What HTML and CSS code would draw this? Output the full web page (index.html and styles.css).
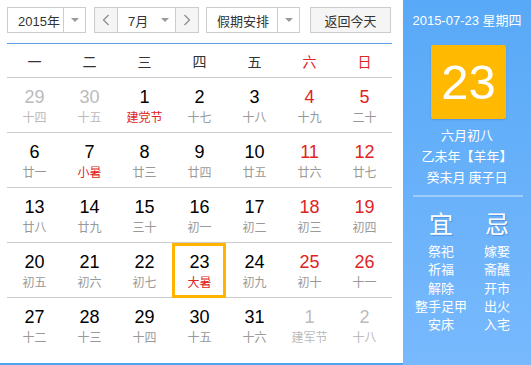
FILE: index.html
```html
<!DOCTYPE html>
<html lang="zh-CN">
<head>
    <meta charset="UTF-8">
    <title>万年历</title>
    <link rel="stylesheet" href="styles.css">
</head>
<body>

<div class="calendar">
    <div class="main">
        <div class="toolbar">
            <div class="select year">
                <span class="select-text">2015年</span>
                <span class="select-arrow"><i class="caret"></i></span>
            </div>
            <div class="month-group">
                <span class="nav-btn">
                    <svg width="8" height="12" viewBox="0 0 8 12"><polyline points="6.5,1 1.5,6 6.5,11" fill="none" stroke="#888" stroke-width="1.2"/></svg>
                </span>
                <span class="month-text">7月</span>
                <span class="month-arrow"><i class="caret"></i></span>
                <span class="nav-btn">
                    <svg width="8" height="12" viewBox="0 0 8 12"><polyline points="1.5,1 6.5,6 1.5,11" fill="none" stroke="#888" stroke-width="1.2"/></svg>
                </span>
            </div>
            <div class="select holiday">
                <span class="select-text">假期安排</span>
                <span class="select-arrow"><i class="caret"></i></span>
            </div>
            <button class="today-btn">返回今天</button>
        </div>

        <div class="weekdays">
            <span>一</span><span>二</span><span>三</span><span>四</span><span>五</span>
            <span class="red">六</span><span class="red">日</span>
        </div>

        <div class="week">
            <div class="day other"><b>29</b><small>十四</small></div>
            <div class="day other"><b>30</b><small>十五</small></div>
            <div class="day"><b>1</b><small class="fest">建党节</small></div>
            <div class="day"><b>2</b><small>十七</small></div>
            <div class="day"><b>3</b><small>十八</small></div>
            <div class="day weekend"><b>4</b><small>十九</small></div>
            <div class="day weekend"><b>5</b><small>二十</small></div>
        </div>
        <div class="week">
            <div class="day"><b>6</b><small>廿一</small></div>
            <div class="day"><b>7</b><small class="fest">小暑</small></div>
            <div class="day"><b>8</b><small>廿三</small></div>
            <div class="day"><b>9</b><small>廿四</small></div>
            <div class="day"><b>10</b><small>廿五</small></div>
            <div class="day weekend"><b>11</b><small>廿六</small></div>
            <div class="day weekend"><b>12</b><small>廿七</small></div>
        </div>
        <div class="week">
            <div class="day"><b>13</b><small>廿八</small></div>
            <div class="day"><b>14</b><small>廿九</small></div>
            <div class="day"><b>15</b><small>三十</small></div>
            <div class="day"><b>16</b><small>初一</small></div>
            <div class="day"><b>17</b><small>初二</small></div>
            <div class="day weekend"><b>18</b><small>初三</small></div>
            <div class="day weekend"><b>19</b><small>初四</small></div>
        </div>
        <div class="week">
            <div class="day"><b>20</b><small>初五</small></div>
            <div class="day"><b>21</b><small>初六</small></div>
            <div class="day"><b>22</b><small>初七</small></div>
            <div class="day today"><b>23</b><small class="fest">大暑</small></div>
            <div class="day"><b>24</b><small>初九</small></div>
            <div class="day weekend"><b>25</b><small>初十</small></div>
            <div class="day weekend"><b>26</b><small>十一</small></div>
        </div>
        <div class="week last">
            <div class="day"><b>27</b><small>十二</small></div>
            <div class="day"><b>28</b><small>十三</small></div>
            <div class="day"><b>29</b><small>十四</small></div>
            <div class="day"><b>30</b><small>十五</small></div>
            <div class="day"><b>31</b><small>十六</small></div>
            <div class="day other"><b>1</b><small>建军节</small></div>
            <div class="day other"><b>2</b><small>十八</small></div>
        </div>
    </div>

    <div class="side">
        <div class="side-date">2015-07-23 星期四</div>
        <div class="big-day">23</div>
        <div class="lunar">
            <p>六月初八</p>
            <p>乙未年【羊年】</p>
            <p>癸未月 庚子日</p>
        </div>
        <div class="divider"></div>
        <div class="almanac">
            <div class="col">
                <h2>宜</h2>
                <p>祭祀</p>
                <p>祈福</p>
                <p>解除</p>
                <p>整手足甲</p>
                <p>安床</p>
            </div>
            <div class="col">
                <h2>忌</h2>
                <p>嫁娶</p>
                <p>斋醮</p>
                <p>开市</p>
                <p>出火</p>
                <p>入宅</p>
            </div>
        </div>
    </div>
</div>

</body>
</html>
```

FILE: styles.css
```css
/* whole widget fills the window */
body {
    margin: 0;
    font-family: "Liberation Sans", "Noto Sans CJK SC", sans-serif;
    background: #fff;
}

.calendar {
    display: flex;
    width: 531px;
    height: 365px;
}

/* left part: toolbar + month grid */
.main {
    width: 403px;
    box-sizing: border-box;
    padding: 7px 11px 0 7px;
    border-bottom: 2px solid #4ea2f2;
    display: flex;
    flex-direction: column;
}

.toolbar {
    display: flex;
    height: 26px;
    font-size: 13px;
    color: #333;
}

.select {
    display: flex;
    box-sizing: border-box;
    height: 26px;
    border: 1px solid #ccc;
    background: #fff;
}

.select-text {
    display: flex;
    align-items: center;
    padding-left: 10px;
    border-right: 1px solid #ccc;
}

.select-arrow,
.month-arrow {
    display: flex;
    align-items: center;
    justify-content: center;
}

.caret {
    width: 0;
    height: 0;
    border-left: 4px solid transparent;
    border-right: 4px solid transparent;
    border-top: 4px solid #999;
}

.year {
    width: 79px;
    margin-right: 8px;
}
.year .select-text { width: 45px; }
.year .select-arrow { flex: 1; }

.month-group {
    display: flex;
    box-sizing: border-box;
    width: 105px;
    height: 26px;
    border: 1px solid #ccc;
    margin-right: 7px;
}

.nav-btn {
    display: flex;
    align-items: center;
    justify-content: center;
    width: 22px;
    background: #f5f5f5;
}
.nav-btn:first-child { border-right: 1px solid #ccc; }
.nav-btn:last-child { border-left: 1px solid #ccc; }

.month-text {
    display: flex;
    align-items: center;
    padding-left: 10px;
    width: 27px;
}
.month-arrow { flex: 1; }

.holiday {
    width: 94px;
    margin-right: 10px;
}
.holiday .select-text { width: 60px; }
.holiday .select-arrow { flex: 1; }

.today-btn {
    width: 81px;
    height: 26px;
    border: 1px solid #ccc;
    background: #f5f5f5;
    font: inherit;
    color: #333;
    padding: 0;
}

/* weekday names */
.weekdays {
    display: flex;
    margin-top: 10px;
    height: 33px;
    border-top: 1px solid #5a9fe6;
    border-bottom: 1px solid #ccc;
    font-family: "Noto Sans CJK SC", sans-serif;
    font-size: 14px;
    color: #333;
}
.weekdays span {
    width: 55px;
    display: flex;
    align-items: center;
    justify-content: center;
}
.weekdays .red { color: #e02424; }

/* date rows */
.week {
    display: flex;
    height: 54px;
    border-bottom: 1px solid #ccc;
}
.week.last {
    flex: 1;
    border-bottom: 0;
}

.day {
    position: relative;
    width: 55px;
    padding-top: 8px;
    text-align: center;
}
.day b {
    display: block;
    font-weight: normal;
    font-size: 18px;
    line-height: 22px;
    color: #000;
}
.day small {
    display: block;
    font-family: "Noto Sans CJK SC", sans-serif;
    font-size: 12px;
    line-height: 18px;
    color: #999;
}
.day.weekend b { color: #e02424; }
.day small.fest { color: #e02424; }
.day.other b,
.day.other small { color: #bbb; }

/* selected day frame sits over the cell */
.day.today::after {
    content: "";
    position: absolute;
    top: 0;
    left: 0;
    width: 54px;
    bottom: -1px;
    box-sizing: border-box;
    border: 3px solid #ffb400;
}

/* right info panel */
.side {
    width: 128px;
    background: linear-gradient(#58a9f7, #78b9fd);
    color: #fff;
    font-family: "Liberation Sans", "Noto Sans CJK SC", sans-serif;
}

.side-date {
    margin-top: 12px;
    line-height: 17px;
    font-size: 13px;
    text-align: center;
}

.big-day {
    width: 75px;
    height: 74px;
    margin: 16px 0 0 28px;
    background: #ffb900;
    border-radius: 2px;
    font-size: 49px;
    line-height: 74px;
    text-align: center;
    box-shadow: 0 1px 2px rgba(0, 60, 140, 0.2);
}

.lunar {
    margin-top: 5px;
    font-family: "Noto Sans CJK SC", sans-serif;
    font-size: 13px;
    text-align: center;
}
.lunar p {
    margin: 0;
    line-height: 21px;
}

.divider {
    height: 2px;
    margin: 8px 8px 0 10px;
    background: rgba(255, 255, 255, 0.35);
}

.almanac {
    display: flex;
    margin: 11px 0 0 10px;
    font-family: "Noto Sans CJK SC", sans-serif;
}
.almanac .col {
    width: 56px;
    text-align: center;
}
.almanac h2 {
    margin: 0 0 4px;
    font-size: 24px;
    font-weight: normal;
    line-height: 30px;
    text-shadow: 1px 1px 1px rgba(40, 80, 160, 0.35);
}
.almanac p {
    margin: 0;
    font-size: 13px;
    line-height: 18.3px;
}
```
